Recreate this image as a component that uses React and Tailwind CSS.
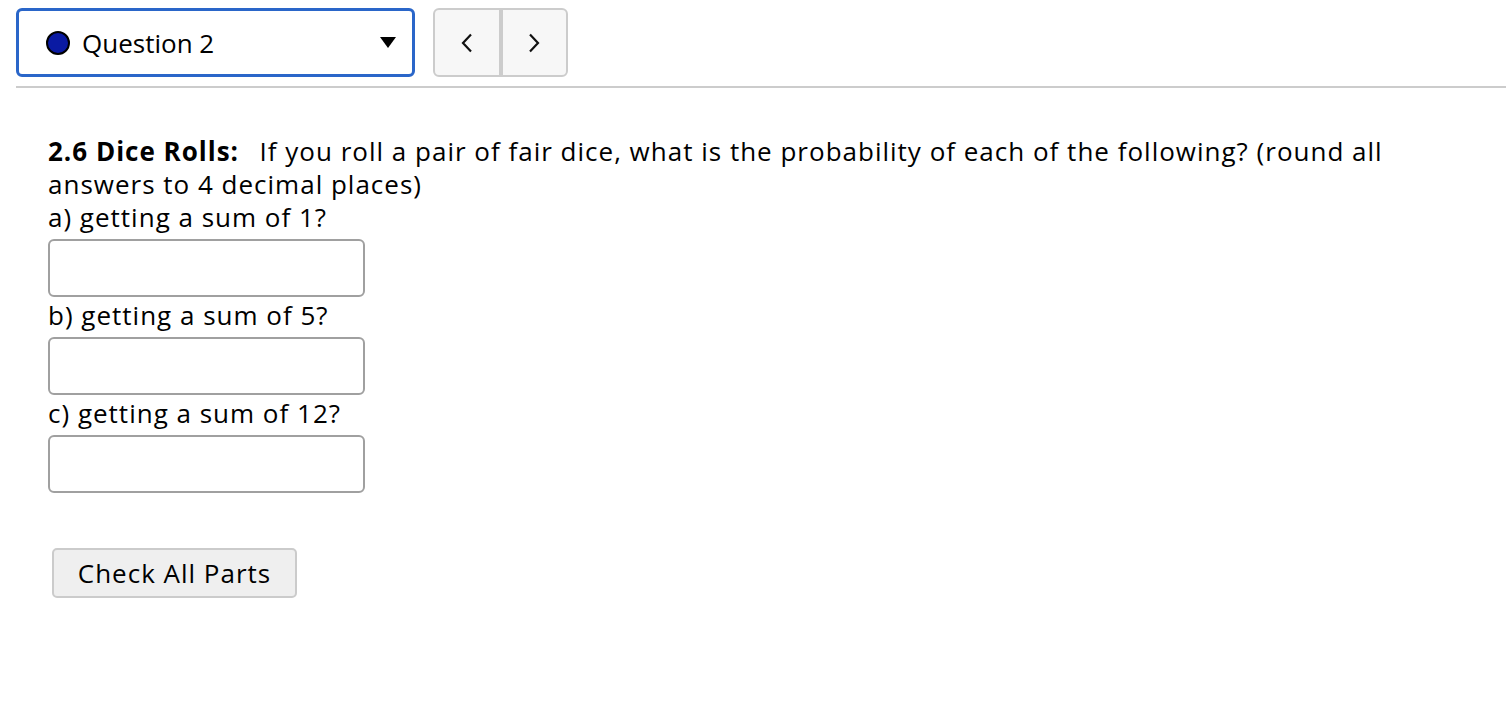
import React from "react";

function Chevron({ dir }) {
  return (
    <svg width="14" height="20" viewBox="0 0 14 20" className="block">
      {dir === "left" ? (
        <polyline points="11,1.5 3,10 11,18.5" fill="none" stroke="#111" strokeWidth="2.2" />
      ) : (
        <polyline points="3,1.5 11,10 3,18.5" fill="none" stroke="#111" strokeWidth="2.2" />
      )}
    </svg>
  );
}

function Part({ label }) {
  return (
    <div className="flex flex-col">
      <div className="h-[33px] leading-[33px]">{label}</div>
      <div className="mt-[5px] mb-[2px] h-[58px] w-[317px] rounded-[6px] border-2 border-[#a0a0a0] bg-white" />
    </div>
  );
}

export default function App() {
  return (
    <div className="min-h-[716px] w-[1506px] bg-white font-['Open_Sans',sans-serif] text-black">
      <div className="flex gap-[18px] pl-[16px] pt-[8px]">
        <div className="flex h-[69px] w-[399px] items-center rounded-[6px] border-[3px] border-[#2a66c9] bg-white pl-[27px] pr-[16px]">
          <span className="h-[24px] w-[24px] shrink-0 rounded-full border-2 border-black bg-[#0a1aa3]" />
          <span className="ml-[12px] text-[26px] leading-none">Question 2</span>
          <svg width="16" height="11" viewBox="0 0 16 11" className="ml-auto">
            <polygon points="0,0 16,0 8,11" fill="#000" />
          </svg>
        </div>
        <div className="flex h-[69px] w-[135px] overflow-hidden rounded-[6px] border-2 border-[#cccccc] bg-[#f7f7f7]">
          <div className="flex flex-1 items-center justify-center border-r-2 border-[#cccccc]">
            <Chevron dir="left" />
          </div>
          <div className="flex flex-1 items-center justify-center border-l-2 border-[#cccccc]">
            <Chevron dir="right" />
          </div>
        </div>
      </div>
      <div className="ml-[16px] mt-[9px] h-[2px] bg-[#cccccc]" />
      <div className="w-[1448px] pl-[48px] pt-[47px] text-[26px] tracking-[1px]">
        <p className="w-[1400px] leading-[33px]">
          <b className="mr-[5px] font-bold">2.6 Dice Rolls:</b>
          {"\u00a0 "}If you roll a pair of fair dice, what is the probability of each of the following? (round all answers to 4 decimal places)
        </p>
        <Part label="a) getting a sum of 1?" />
        <Part label="b) getting a sum of 5?" />
        <Part label="c) getting a sum of 12?" />
        <button className="ml-[4px] mt-[53px] flex h-[50px] w-[245px] items-center justify-center rounded-[5px] border-2 border-[#cbcbcb] bg-[#efefef] text-[26px] tracking-[1px] text-black">
          Check All Parts
        </button>
      </div>
    </div>
  );
}
